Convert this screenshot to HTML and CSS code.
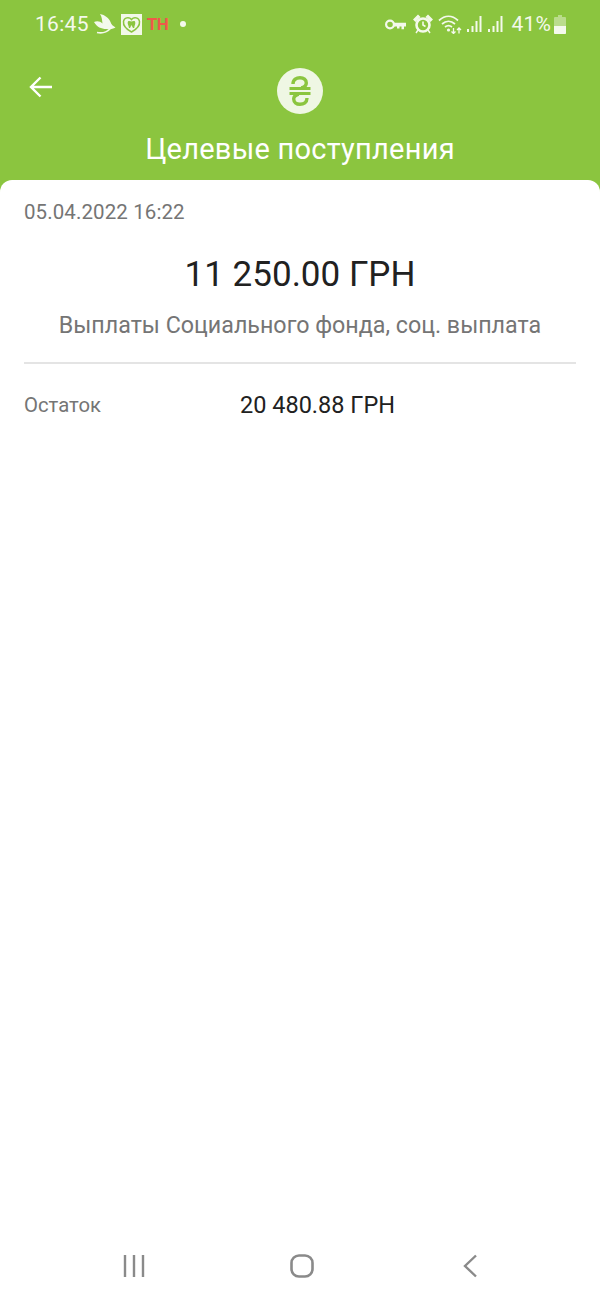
FILE: index.html
```html
<!DOCTYPE html>
<html lang="ru">
<head>
<meta charset="utf-8">
<title>Целевые поступления</title>
<link rel="stylesheet" href="styles.css">
</head>
<body>
<div class="screen">
  <header class="top">
    <div class="status">
      <div class="status-group">
        <span class="clock">16:45</span>
        <svg class="ic-leaf" viewBox="0 0 22 20"><path d="M0 8c3-1.500 6-1 8.500 1.500C8 6 8 3 6 0c5 1 9 4 10.500 8 .8 2.500 2.500 4 5 5.500-3 1.500-6 2.500-9 1.500C7 15 3 13 0 8z" fill="#f4f9ec"/><path d="M3 18.500c5 1 10-.5 13-3.500" stroke="#f4f9ec" stroke-width="1.600" fill="none"/></svg>
        <svg class="ic-tooth" viewBox="0 0 21 21"><rect width="21" height="21" fill="#f2f8e8"/><path d="M10.500 18C5 15 2 11.500 2.500 7.500 3 3.500 8 2.500 10.500 5.500c2.500-3 7.500-2 8 2 .5 4-2.500 7.500-8 10.500z" fill="none" stroke="#8bc53f" stroke-width="1.500"/><path d="M7 7.500c1-1 2.500 0 3.500 0s2.500-1 3.500 0c1 2-.5 3.500-.8 6.500h-1.200l-1.500-3-1.500 3H8c-.3-3-2-4.500-1-6.500z" fill="#8bc53f"/></svg>
        <span class="brand">TH</span>
        <span class="dot"></span>
      </div>
      <div class="status-group right">
        <svg class="ic-key" viewBox="0 0 21 13"><circle cx="5" cy="6.500" r="3.900" fill="none" stroke="#f4f9ec" stroke-width="2.200"/><path d="M8.500 4.800H21v3.800h-2v2.600h-2.500V8.600h-2v1.800H12V8.600H8.500z" fill="#f4f9ec"/></svg>
        <svg class="ic-alarm" viewBox="0 0 20 20"><circle cx="10" cy="11" r="6.500" fill="none" stroke="#f4f9ec" stroke-width="2.600"/><path d="M10 7.500V11l2.500 1.500" stroke="#f4f9ec" stroke-width="1.600" fill="none"/><path d="M1 5.500l4-4 1.500 1.500-4 4zM19 5.500l-4-4L13.500 3l4 4zM5 16l-2 3M15 16l2 3" fill="#f4f9ec" stroke="#f4f9ec" stroke-width="1.400"/></svg>
        <svg class="ic-wifi" viewBox="0 0 24 20"><g fill="none" stroke="#f4f9ec" stroke-width="1.700"><path d="M1 6.500c6-5.500 13-5.500 19 0"/><path d="M4 10c4-3.500 9-3.500 13 0"/><path d="M7 13c2.500-2 4.500-2 7 0"/></g><circle cx="10.500" cy="16" r="1.600" fill="#f4f9ec"/><path d="M15.500 14v5.500M13.500 17.500l2 2 2-2M21 19.500V14M19 16l2-2 2 2" stroke="#f4f9ec" stroke-width="1.300" fill="none"/></svg>
        <svg class="ic-signal" viewBox="0 0 16 18"><path d="M1 14h2v3H1zM5.500 11h2v6h-2zM9.500 6h2v11h-2zM13.500 1h2v16h-2z" fill="#f4f9ec"/></svg>
        <svg class="ic-signal" viewBox="0 0 16 18"><path d="M1 14h2v3H1zM5.500 11h2v6h-2zM9.500 6h2v11h-2zM13.500 1h2v16h-2z" fill="#f4f9ec"/></svg>
        <span class="percent">41%</span>
        <svg class="ic-battery" viewBox="0 0 12 19"><path d="M4 0h4v2h3a1 1 0 0 1 1 1v15a1 1 0 0 1-1 1H1a1 1 0 0 1-1-1V3a1 1 0 0 1 1-1h3z" fill="#f4f9ec" fill-opacity=".45"/><path d="M0 11h12v7a1 1 0 0 1-1 1H1a1 1 0 0 1-1-1z" fill="#f4f9ec"/></svg>
      </div>
    </div>
    <div class="toolbar">
      <svg class="ic-back" viewBox="0 0 24 22"><path d="M23 11H2M11.500 1.500 2 11l9.500 9.500" fill="none" stroke="#fff" stroke-width="2.400"/></svg>
      <div class="badge">
        <svg viewBox="0 0 24 30"><path d="M5 8C5 3.500 8.500 1.700 12 1.700c3.700 0 6.300 2.200 6.300 5.200 0 2.800-2.300 4.300-5 5.100M19 22c0 4.500-3.500 6.300-7 6.300-3.700 0-6.300-2.200-6.300-5.200 0-2.800 2.300-4.300 5-5.100" fill="none" stroke="#8bc53f" stroke-width="3.400"/><path d="M1.500 12.500h21M1.500 17.500h21" stroke="#8bc53f" stroke-width="2.800"/></svg>
      </div>
      <h1 class="title">Целевые поступления</h1>
    </div>
  </header>
  <main class="sheet">
    <p class="date">05.04.2022 16:22</p>
    <p class="amount">11 250.00 ГРН</p>
    <p class="desc">Выплаты Социального фонда, соц. выплата</p>
    <div class="row">
      <span class="row-label">Остаток</span>
      <span class="row-value">20 480.88 ГРН</span>
    </div>
  </main>
  <nav class="navbar">
    <svg class="ic-recent" viewBox="0 0 22 22"><path d="M2 0v22M11 0v22M20 0v22" stroke="#8a8a8a" stroke-width="2.400" fill="none"/></svg>
    <svg class="ic-home" viewBox="0 0 24 24"><rect x="1.500" y="1.500" width="21" height="21" rx="7.500" fill="none" stroke="#8a8a8a" stroke-width="2.600"/></svg>
    <svg class="ic-tri" viewBox="0 0 14 24"><path d="M13 1.500 2 12l11 10.500" fill="none" stroke="#8a8a8a" stroke-width="2.400"/></svg>
  </nav>
</div>
</body>
</html>
```

FILE: styles.css
```css
* { box-sizing: border-box; }
html, body { margin: 0; padding: 0; }
body {
  width: 600px;
  height: 1299px;
  overflow: hidden;
  background: #fff;
  font-family: Roboto, "Noto Sans", sans-serif;
  color: #212121;
}
p, h1 { margin: 0; font-weight: 400; }
svg { display: block; flex: none; }
.screen { height: 1299px; display: flex; flex-direction: column; }
.top { height: 192px; flex: none; background: #8bc53f; color: #f4f9ec; }
.status {
  height: 48px;
  padding: 0 34px 0 35px;
  display: flex;
  align-items: center;
  justify-content: space-between;
}
.status-group { display: flex; align-items: center; }
.clock { font-size: 21px; line-height: 24px; letter-spacing: .3px; }
.ic-leaf { width: 22px; height: 20px; margin-left: 5px; }
.ic-tooth { width: 21px; height: 21px; margin-left: 5px; }
.brand { font-size: 17px; font-weight: 700; color: #f0594a; margin-left: 5px; letter-spacing: -.5px; width: 21px; }
.dot { width: 6px; height: 6px; border-radius: 50%; background: #f4f9ec; margin-left: 12px; }
.ic-key { width: 21px; height: 13px; }
.ic-alarm { width: 20px; height: 20px; margin-left: 7px; }
.ic-wifi { width: 24px; height: 20px; margin-left: 5px; }
.ic-signal { width: 16px; height: 18px; margin-left: 4px; }
.ic-signal + .ic-signal { margin-left: 5px; }
.percent { font-size: 21px; line-height: 24px; margin-left: 8px; letter-spacing: .2px; }
.ic-battery { width: 12px; height: 19px; margin-left: 3px; }
.toolbar {
  position: relative;
  display: flex;
  flex-direction: column;
  align-items: center;
  padding-top: 20px;
}
.ic-back { position: absolute; left: 29px; top: 28px; width: 24px; height: 22px; }
.badge {
  width: 46px;
  height: 46px;
  border-radius: 50%;
  background: #eff7e4;
  display: flex;
  align-items: center;
  justify-content: center;
}
.badge svg { width: 24px; height: 30px; }
.title {
  margin-top: 18px;
  font-size: 29px;
  line-height: 34px;
  color: #fff;
  letter-spacing: .25px;
  white-space: nowrap;
}
.sheet {
  flex: 1;
  margin-top: -12px;
  background: #fff;
  border-radius: 12px 12px 0 0;
  padding: 20px 24px 0;
}
.date { font-size: 20.500px; line-height: 24px; letter-spacing: .1px; color: #757575; }
.amount { margin-top: 29px; font-size: 35px; line-height: 44px; text-align: center; color: #212121; }
.desc {
  margin-top: 14px;
  padding-bottom: 23px;
  border-bottom: 2px solid #e4e4e4;
  font-size: 23.250px;
  line-height: 28px;
  text-align: center;
  color: #757575;
}
.row { display: flex; align-items: center; margin-top: 28px; line-height: 26px; }
.row-label { width: 216px; font-size: 20.300px; color: #757575; }
.row-value { font-size: 23.500px; color: #212121; }
.navbar {
  height: 66px;
  flex: none;
  padding: 0 123px;
  display: flex;
  align-items: center;
  gap: 145px;
}
.ic-recent { width: 22px; height: 22px; }
.ic-home { width: 24px; height: 24px; }
.ic-tri { width: 14px; height: 24px; margin-left: 4px; }
```
